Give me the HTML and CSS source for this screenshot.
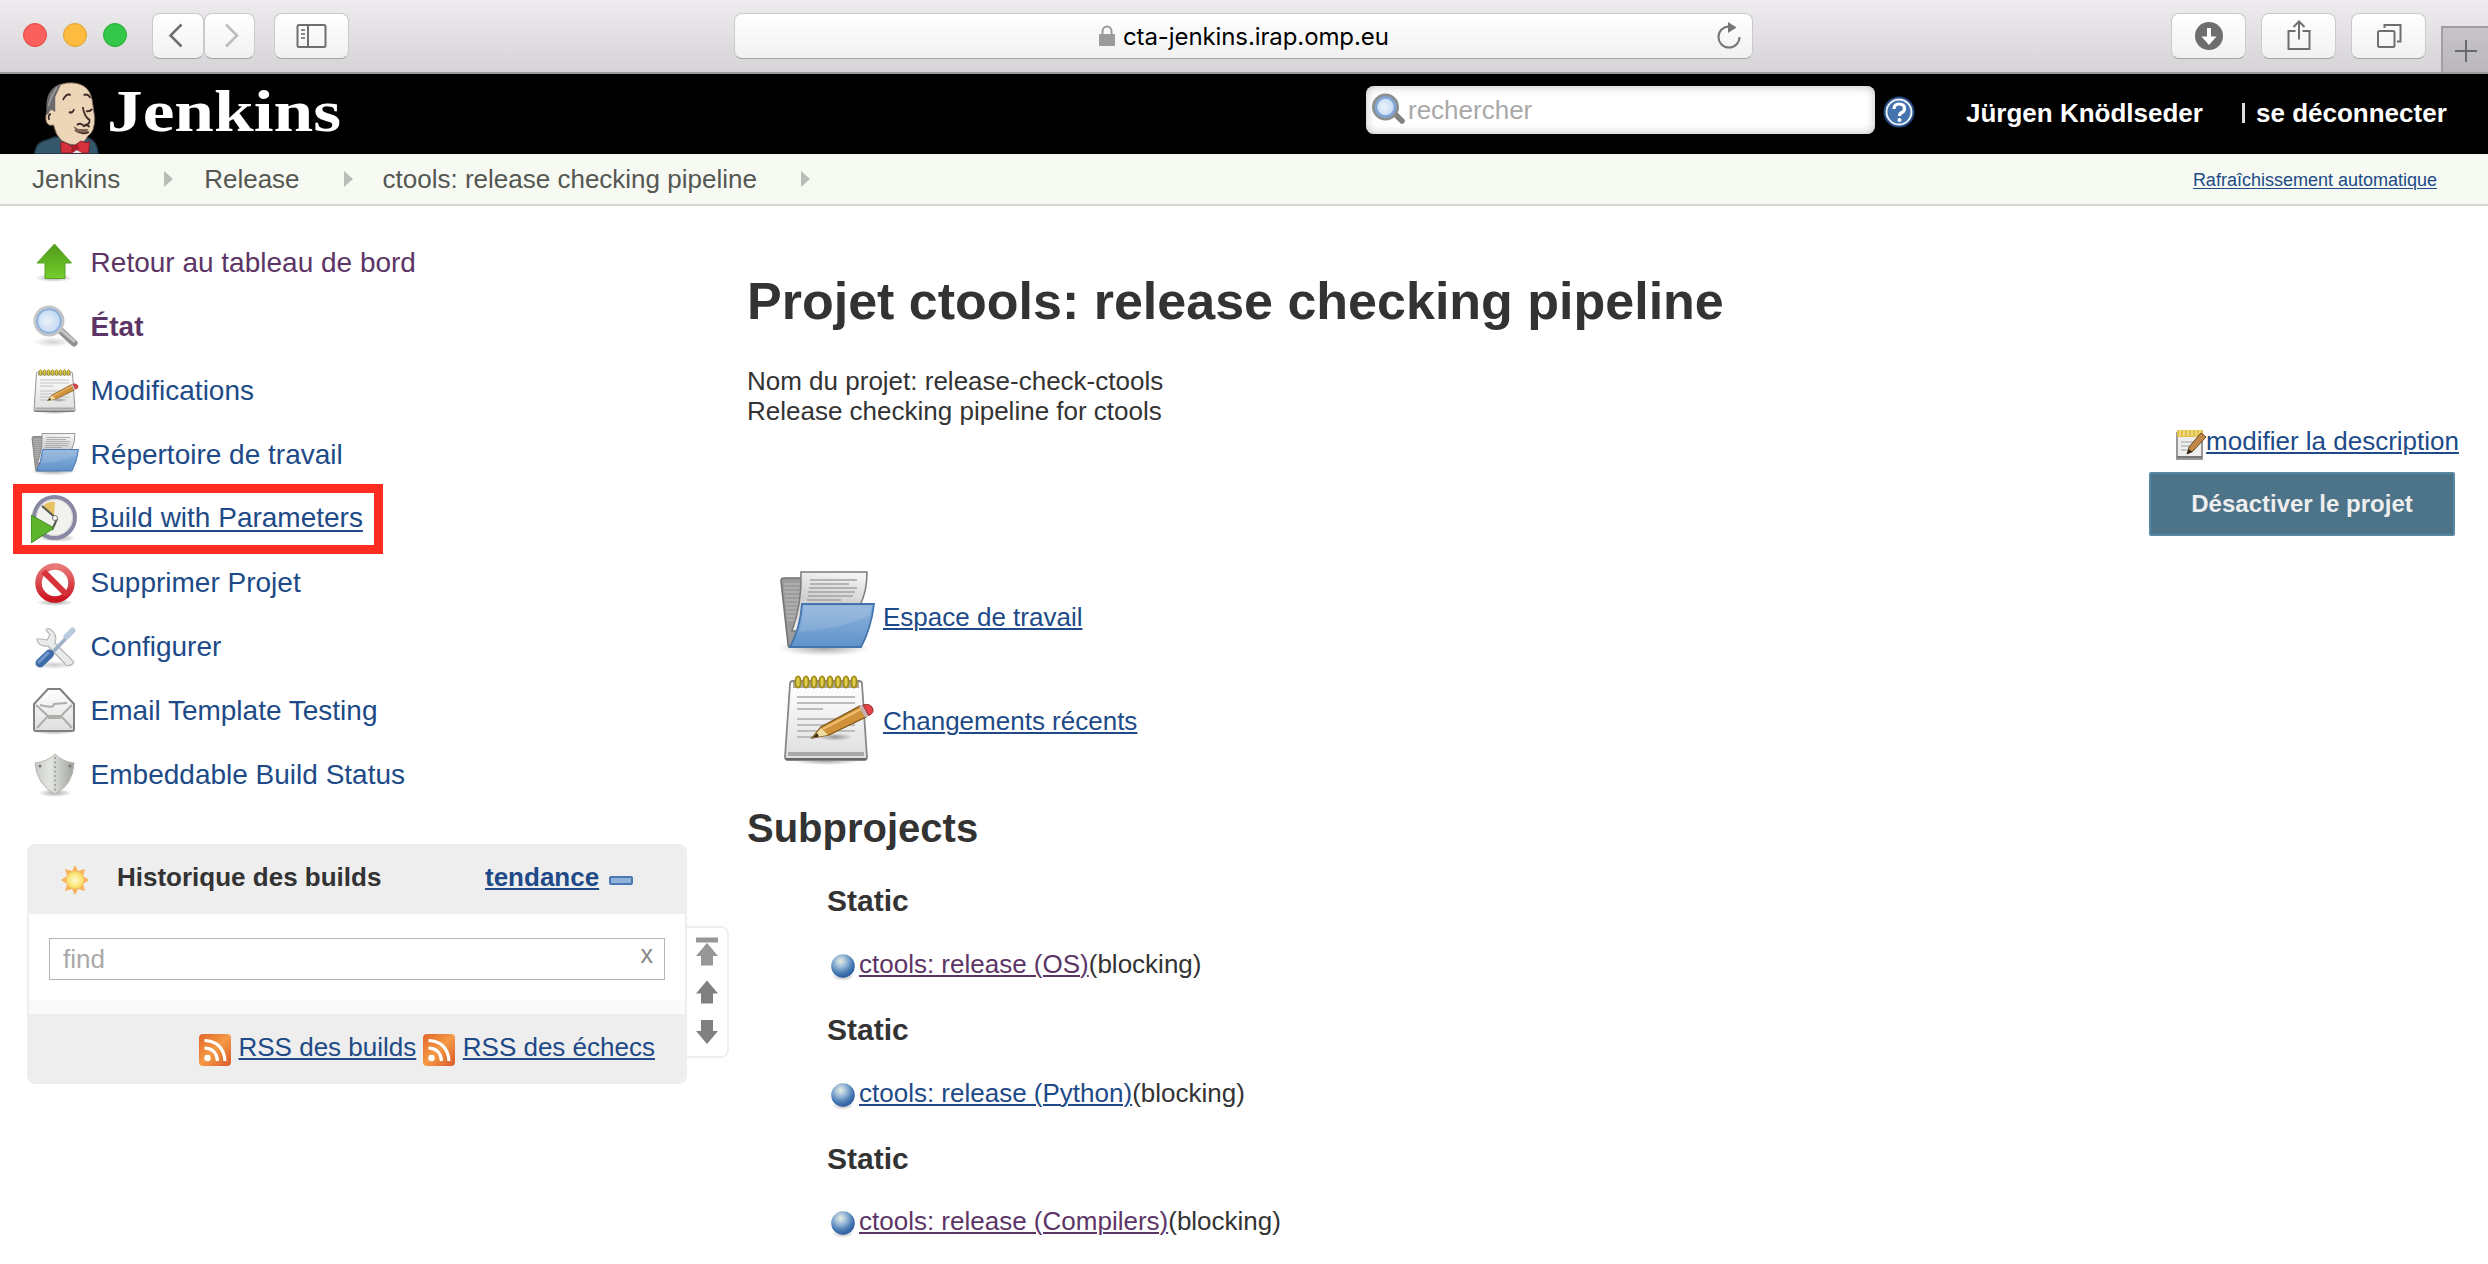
FILE: index.html
```html
<!DOCTYPE html>
<html lang="fr">
<head>
<meta charset="utf-8">
<title>ctools: release checking pipeline [Jenkins]</title>
<link rel="stylesheet" href="styles.css">
</head>
<body>
<svg class="defs" width="0" height="0">
  <defs>
    <linearGradient id="gBlue" x1="0" y1="0" x2="0" y2="1"><stop offset="0" stop-color="#8fb4dc"/><stop offset="1" stop-color="#6093cb"/></linearGradient>
    <linearGradient id="gPaper" x1="0" y1="0" x2="0" y2="1"><stop offset="0" stop-color="#ffffff"/><stop offset="1" stop-color="#dedede"/></linearGradient>
    <linearGradient id="gSheet" x1="0.6" y1="0" x2="0.4" y2="1"><stop offset="0" stop-color="#f4f4f4"/><stop offset="0.5" stop-color="#cfcfcf"/><stop offset="1" stop-color="#ececec"/></linearGradient>
    <linearGradient id="gGreen" x1="0" y1="0" x2="0" y2="1"><stop offset="0" stop-color="#4f9a1c"/><stop offset="1" stop-color="#74ce2b"/></linearGradient>
    <linearGradient id="gRed" x1="0" y1="0" x2="0" y2="1"><stop offset="0" stop-color="#e87878"/><stop offset="1" stop-color="#cc1620"/></linearGradient>
    <linearGradient id="gShield" x1="0" y1="0" x2="1" y2="0"><stop offset="0" stop-color="#c9ccc6"/><stop offset="0.4" stop-color="#e3e5e1"/><stop offset="1" stop-color="#9fa29c"/></linearGradient>
    <linearGradient id="gRss" x1="0" y1="0" x2="1" y2="1"><stop offset="0" stop-color="#e2652b"/><stop offset="0.5" stop-color="#f59a45"/><stop offset="1" stop-color="#d9592b"/></linearGradient>
    <radialGradient id="gLens" cx="0.45" cy="0.5" r="0.6"><stop offset="0" stop-color="#eaf2fb"/><stop offset="1" stop-color="#b4cfee"/></radialGradient>
    <radialGradient id="gBall" cx="0.4" cy="0.3" r="0.75"><stop offset="0" stop-color="#e8eedf"/><stop offset="0.3" stop-color="#a3c1dc"/><stop offset="0.7" stop-color="#4377b3"/><stop offset="1" stop-color="#2a5798"/></radialGradient>
    <radialGradient id="gShadow"><stop offset="0" stop-color="#000" stop-opacity="0.35"/><stop offset="1" stop-color="#000" stop-opacity="0"/></radialGradient>
    <radialGradient id="gSun"><stop offset="0" stop-color="#fffbd0"/><stop offset="1" stop-color="#f7dc5c"/></radialGradient>
    <symbol id="folder" viewBox="0 0 96 96">
      <ellipse cx="45" cy="79" rx="46" ry="8" fill="url(#gShadow)"/>
      <path d="M2 12q0-3 3-3h24v69H11q-2 0-2-3z" fill="#9c9c9c" stroke="#727272" stroke-width="1.6"/>
      <path d="M5 15h18M5 19h18M6 23h17M6 27h16M6 31h15M7 35h14M7 39h13M7 43h12M8 47h10M8 51h8" stroke="#c0c0c0" stroke-width="1"/>
      <path d="M22 3h66q0 20-7 33L40 62H13Q23 35 22 3z" fill="url(#gSheet)" stroke="#7b7b7b" stroke-width="1.5"/>
      <path d="M31 11h47M31 15h39M30 19h48M29 23h47M29 27h45M28 31h34" stroke="#a2a2a2" stroke-width="1.6"/>
      <path d="M23 35h72q-3 25-13 43H11q10-18 12-43z" fill="url(#gBlue)" stroke="#4474ae" stroke-width="1.8"/>
      <path d="M25 37h67q-1 5-2 10Q60 60 20 63q4-12 5-26z" fill="#fff" opacity="0.12"/>
    </symbol>
    <symbol id="notepad" viewBox="0 0 96 96">
      <ellipse cx="47" cy="88" rx="34" ry="4" fill="url(#gShadow)"/>
      <path d="M14 8h66q3 0 3 3l5 73q0 3-3 3H9q-3 0-3-3l5-73q0-3 3-3z" fill="url(#gPaper)" stroke="#888" stroke-width="1.8"/>
      <path d="M14 9h66v6H14z" fill="#a9a996"/>
      <path d="M9 79h76v4H9z" fill="#a8a8a8"/>
      <path d="M7 86h80" stroke="#666" stroke-width="2"/>
      <g fill="#dccb46" stroke="#a08a1c" stroke-width="1.8"><ellipse cx="19" cy="9" rx="2.6" ry="5.6"/><ellipse cx="27" cy="9" rx="2.6" ry="5.6"/><ellipse cx="35" cy="9" rx="2.6" ry="5.6"/><ellipse cx="43" cy="9" rx="2.6" ry="5.6"/><ellipse cx="51" cy="9" rx="2.6" ry="5.6"/><ellipse cx="59" cy="9" rx="2.6" ry="5.6"/><ellipse cx="67" cy="9" rx="2.6" ry="5.6"/><ellipse cx="75" cy="9" rx="2.6" ry="5.6"/></g>
      <path d="M18 24h58M18 30h58M18 36h26M18 46h58M18 52h58M18 58h58M18 64h22" stroke="#bcbcbc" stroke-width="1.8"/>
      <ellipse cx="56" cy="64" rx="18" ry="4" fill="url(#gShadow)"/>
      <path d="M33 65l9-11 39-21 6 11-37 18z" fill="#d0923a" stroke="#7c5315" stroke-width="1.3"/>
      <path d="M44 56l38-20" stroke="#efbf70" stroke-width="2"/>
      <path d="M33 65l9-10 7 7z" fill="#f0dca4"/>
      <path d="M33 65l5-5 2 3.500z" fill="#3b2a10"/>
      <path d="M80 33.500l4-2 6 11-4 2z" fill="#c9b3b0"/>
      <path d="M84 32q7-2 9.500 3t-4 7.500z" fill="#e8404a" stroke="#8d3329" stroke-width="1"/>
    </symbol>
    <symbol id="ball" viewBox="0 0 32 32">
      <ellipse cx="16" cy="27" rx="11" ry="5" fill="url(#gShadow)"/>
      <circle cx="16" cy="17" r="11.800" fill="url(#gBall)"/>
    </symbol>
    <symbol id="rss" viewBox="0 0 32 32">
      <rect width="32" height="32" rx="4" fill="url(#gRss)"/>
      <circle cx="8.500" cy="24" r="3.200" fill="#fff"/>
      <path d="M5.500 14q12 0.500 13 13M5.500 6.500q19 1 20.500 20.500" fill="none" stroke="#fff" stroke-width="3.200"/>
    </symbol>
  </defs>
</svg>

<div class="toolbar">
  <div class="lights"><i class="light red"></i><i class="light yellow"></i><i class="light green"></i></div>
  <div class="btn nav-back"><svg width="50" height="44" viewBox="0 0 50 44"><path d="M28.500 10.500L17.500 21.500 28.500 32.500" fill="none" stroke="#6e6e6e" stroke-width="2.500"/></svg></div>
  <div class="btn nav-fwd"><svg width="48" height="44" viewBox="0 0 48 44"><path d="M20 10.500L31 21.500 20 32.500" fill="none" stroke="#bcbcbc" stroke-width="2.500"/></svg></div>
  <div class="btn sidebar-btn"><svg width="74" height="44" viewBox="0 0 74 44"><rect x="22.500" y="11" width="28" height="22" rx="1.500" fill="none" stroke="#6e6e6e" stroke-width="2"/><path d="M33 11v22" stroke="#6e6e6e" stroke-width="2"/><path d="M26 16h4M26 20h4M26 24h4" stroke="#8a8a8a" stroke-width="1.800"/></svg></div>
  <div class="address">
    <svg class="lock" width="16" height="22" viewBox="0 0 16 22"><path d="M3.500 10V6.500a4.500 5 0 0 1 9 0V10" fill="none" stroke="#9b9b9b" stroke-width="2"/><rect y="9" width="16" height="12" rx="1" fill="#9b9b9b"/></svg>
    <span class="url">cta-jenkins.irap.omp.eu</span>
    <svg class="reload" width="26" height="28" viewBox="0 0 26 28"><path d="M13 4.500A10.500 10.500 0 1 0 23.500 15" fill="none" stroke="#757575" stroke-width="2"/><path d="M12 0l8.500 5.500L12 11z" fill="#757575"/></svg>
  </div>
  <div class="btn tool"><svg width="74" height="44" viewBox="0 0 74 44"><circle cx="37" cy="22" r="14" fill="#6e6e6e"/><path d="M35 14h4v8.500h5.500L37 31l-7.500-8.500H35z" fill="#fff"/></svg></div>
  <div class="btn tool"><svg width="74" height="44" viewBox="0 0 74 44"><path d="M33.500 17h-7v18h21V17h-7M37 25.500V8M31.500 13L37 7.500 42.500 13" fill="none" stroke="#6e6e6e" stroke-width="2"/></svg></div>
  <div class="btn tool"><svg width="74" height="44" viewBox="0 0 74 44"><rect x="26" y="17" width="16.500" height="16" rx="1.500" fill="none" stroke="#6e6e6e" stroke-width="2"/><path d="M32.500 14v-3H48.500v16.500H45" fill="none" stroke="#6e6e6e" stroke-width="2"/></svg></div>
  <div class="newtab"><svg width="45" height="46" viewBox="0 0 45 46"><path d="M12 23h22M23 12v22" stroke="#6a6a6c" stroke-width="2"/></svg></div>
</div>

<header class="header">
  <svg class="logo" width="330" height="80" viewBox="0 0 330 80">
    <g transform="translate(-1 0) scale(.86 1)">
    <path d="M3 80q1-12 14-14l9-3 40 1q10 3 11 16z" fill="#35586d" stroke="#1e3442" stroke-width="1.500"/>
    <path d="M20 29q0-18 20-20 26-2 30 17l3 18q0 14-8 18-4 8-15 9-20 0-25-20-8 2-9-6 0-8 4-8z" fill="#edd5b8" stroke="#6f5a4a" stroke-width="1"/>
    <path d="M17 40q-3-26 17-30l-7 13v15l-4-2q-3 0-4 5z" fill="#6c6a6c"/>
    <path d="M22 24l7-11M19 32l5-12" stroke="#9b999b" stroke-width="2"/>
    <path d="M36 26q4-7 9-5M60 21q5-2 8 3M43 38q4 2 6-3M63 37q4 1 7-2M59 33q2 10 8 13 0 5-6 5M22 40q-4 1-2 6M52 51q5-3 8 1 4-2 7 1M50 56q7 5 16 2" fill="none" stroke="#3d2c27" stroke-width="2"/>
    <path d="M48 52l6 3 12 0-4 4-10-1z" fill="#7e6557"/>
    <path d="M33 68q8 0 14 5l10-6q7 3 10 0l-1 12H34z" fill="#d5313c" stroke="#7b1f26" stroke-width="1"/>
    <path d="M46 71h8v8h-8z" fill="#a61f2a"/>
    <path d="M47 79l5-3 6 3z" fill="#dfe6ea"/>
    </g>
    <text x="74" y="57" textLength="234" lengthAdjust="spacingAndGlyphs" class="logo-text">Jenkins</text>
  </svg>
  <div class="search">
    <svg width="34" height="32" viewBox="0 0 34 32"><path d="M24 21l7 7" stroke="#82827c" stroke-width="5.500" stroke-linecap="round"/><circle cx="14.500" cy="14" r="12" fill="url(#gLens)" stroke="#8b8f90" stroke-width="3"/><circle cx="14.500" cy="14" r="9.500" fill="none" stroke="#7fa5d6" stroke-width="2.500"/></svg>
    <span class="ph">rechercher</span>
  </div>
  <svg class="help" width="32" height="32" viewBox="0 0 32 32"><circle cx="16" cy="16" r="15.500" fill="#274a82"/><circle cx="16" cy="16" r="12.500" fill="#4574ad" stroke="#e9eff6" stroke-width="2"/><path d="M11 13q0-5 5-5 5.500 0 5.500 4.500 0 3-3 4.200-2 1-2 3.300" fill="none" stroke="#fff" stroke-width="3.200"/><circle cx="16.500" cy="24" r="2" fill="#fff"/></svg>
  <span class="user">Jürgen Knödlseder</span>
  <span class="logout"><i class="bar"></i>se déconnecter</span>
</header>

<nav class="crumbs">
  <span>Jenkins</span><i class="sep s1"></i><span>Release</span><i class="sep s2"></i><span>ctools: release checking pipeline</span><i class="sep s3"></i>
  <a class="auto">Rafraîchissement automatique</a>
</nav>

<div class="page">
  <aside class="side">
    <a class="task visited"><svg width="48" height="48" viewBox="0 0 48 48"><ellipse cx="23" cy="38" rx="19" ry="4" fill="url(#gShadow)"/><path d="M23.500 4L40.500 23H34v15.500H14V23H6z" fill="url(#gGreen)" stroke="#58a226" stroke-width="1"/></svg><span>Retour au tableau de bord</span></a>
    <a class="task visited current"><svg width="48" height="48" viewBox="0 0 48 48"><ellipse cx="22" cy="38" rx="20" ry="5" fill="url(#gShadow)" opacity="0.500"/><path d="M30 27l13 12" stroke="#8f8f8f" stroke-width="7" stroke-linecap="round"/><path d="M30 26l13 11" stroke="#c4c4c4" stroke-width="3" stroke-linecap="round"/><circle cx="18" cy="17" r="14" fill="url(#gLens)" stroke="#c4c5c5" stroke-width="3"/><circle cx="18" cy="17" r="11.800" fill="none" stroke="#8db0dc" stroke-width="2"/></svg><span>État</span></a>
    <a class="task"><svg width="48" height="48"><use href="#notepad"/></svg><span>Modifications</span></a>
    <a class="task"><svg width="48" height="48"><use href="#folder"/></svg><span>Répertoire de travail</span></a>
    <a class="task build"><svg width="48" height="48" viewBox="0 0 48 48"><ellipse cx="26" cy="43" rx="19" ry="4" fill="url(#gShadow)"/><circle cx="23.500" cy="22.500" r="20.500" fill="#f1f1ed" stroke="#8988a2" stroke-width="4"/><circle cx="23.500" cy="22.500" r="18" fill="none" stroke="#cfcfd4" stroke-width="1"/><path d="M23 21L12 11q5-5 12-4z" fill="#e5c365"/><path d="M11 11l15 13-5 11" fill="none" stroke="#55554f" stroke-width="2"/><circle cx="24" cy="23" r="2.500" fill="#fff" stroke="#777" stroke-width="1"/><path d="M0 20l23 13L0 48z" fill="#5db62b" stroke="#3e8520" stroke-width="1"/></svg><span>Build with Parameters</span></a>
    <a class="task"><svg width="48" height="48" viewBox="0 0 48 48"><ellipse cx="24" cy="42.500" rx="19" ry="3.500" fill="url(#gShadow)"/><circle cx="24" cy="23" r="16.500" fill="#fff" stroke="url(#gRed)" stroke-width="6.500"/><path d="M12.500 11.500l23 23" stroke="#d8323a" stroke-width="6"/></svg><span>Supprimer Projet</span></a>
    <a class="task"><svg width="48" height="48" viewBox="0 0 48 48"><ellipse cx="23" cy="41" rx="22" ry="4" fill="url(#gShadow)" opacity="0.600"/><g transform="translate(0 1)"><path d="M6 14q1 8 11 7l18 19q5 2 8-3L24 18q3-9-5-14-4-1-4 1l4 5-3 5-5-1z" fill="#e9eaea" stroke="#b3b5b5" stroke-width="1.200"/><path d="M39 9L21 28" stroke="#9bb0c4" stroke-width="3.500"/><path d="M41.500 5.500L35.500 11.500" stroke="#b8cbdc" stroke-width="6" stroke-linecap="round"/><path d="M18.500 29L9 38" stroke="#3f6ca8" stroke-width="9" stroke-linecap="round"/><path d="M17 28L8 37" stroke="#7099cd" stroke-width="3" stroke-linecap="round"/></g></svg><span>Configurer</span></a>
    <a class="task"><svg width="48" height="48" viewBox="0 0 48 48"><ellipse cx="23" cy="43" rx="22" ry="4" fill="url(#gShadow)"/><path d="M3 16L17 1h12l14 15v25q0 2-2 2H5q-2 0-2-2z" fill="url(#gPaper)" stroke="#80817c" stroke-width="2"/><path d="M5 17l12 11h13l11-11M17 28L6 40M30 28l11 12M17 30h13M9 17q14 4 14-1l13-1" fill="none" stroke="#adaeaa" stroke-width="2"/></svg><span>Email Template Testing</span></a>
    <a class="task"><svg width="48" height="48" viewBox="0 0 48 48"><ellipse cx="24" cy="41" rx="17" ry="4" fill="url(#gShadow)"/><path d="M24 2q8 8 19 9-1 22-19 31Q6 33 4 11q12-1 20-9z" fill="url(#gShield)" stroke="#b3b5b0" stroke-width="1"/><path d="M24 5v34" stroke="#a5a8a2" stroke-width="2" stroke-dasharray="2 2.500"/><circle cx="9" cy="14" r="1.500" fill="#777"/><circle cx="39" cy="14" r="1.500" fill="#777"/></svg><span>Embeddable Build Status</span></a>

    <div class="history">
      <section class="pane">
        <div class="pane-head">
          <svg class="sun" width="30" height="30" viewBox="0 0 30 30"><path d="M15 0l3 6 7-2-2 7 6 4-6 4 2 7-7-2-3 6-3-6-7 2 2-7-6-4 6-4-2-7 7 2z" fill="#f9b25a"/><circle cx="15" cy="15" r="8.800" fill="url(#gSun)" stroke="#f9c468" stroke-width="1"/></svg>
          <b class="pane-title">Historique des builds</b>
          <a class="trend">tendance</a>
          <i class="minus"></i>
        </div>
        <div class="pane-body"><div class="find"><span>find</span><span class="clear">x</span></div></div>
        <div class="pane-strip"></div>
        <div class="pane-foot">
          <svg width="32" height="32"><use href="#rss"/></svg><a>RSS des builds</a>
          <svg class="rss2" width="32" height="32"><use href="#rss"/></svg><a>RSS des échecs</a>
        </div>
      </section>
      <div class="pager"><svg width="41" height="128" viewBox="0 0 41 128"><path d="M9 9.500h22v5H9zM20 15l11 13h-5v9.500H14V28H9z" fill="#979797"/><path d="M20 52.500l11 13h-5v10H14v-10H9z" fill="#808080"/><path d="M20 116l11-13h-5V92H14v11H9z" fill="#808080"/></svg></div>
    </div>
  </aside>

  <main class="main">
    <h1>Projet ctools: release checking pipeline</h1>
    <div class="desc">Nom du projet: release-check-ctools<br>Release checking pipeline for ctools</div>
    <div class="edit"><svg width="30" height="32" viewBox="0 0 30 32"><path d="M1 4h25v26H1z" fill="#eee" stroke="#999" stroke-width="2"/><path d="M1 28h25" stroke="#777" stroke-width="2"/><path d="M1 1h26v7H1z" fill="#e2c04a"/><path d="M4 1v6M8 1v6M12 1v6M16 1v6M20 1v6M24 1v6" stroke="#f2de8e" stroke-width="1.500"/><path d="M5 13h15M5 17h12M5 21h6" stroke="#bbb" stroke-width="1.500"/><path d="M25 4l5 4-13 14-6 3 2-7z" fill="#c0894a" stroke="#65431c" stroke-width="1"/><path d="M11 25l1.500-5 4 3z" fill="#33261a"/></svg><a>modifier la description</a></div>
    <div class="disable-row"><button class="disable">Désactiver le projet</button></div>
    <div class="links">
      <div class="big"><svg width="96" height="96"><use href="#folder"/></svg><a>Espace de travail</a></div>
      <div class="big"><svg width="96" height="96"><use href="#notepad"/></svg><a>Changements récents</a></div>
    </div>
    <h2>Subprojects</h2>
    <div class="subs">
      <h3>Static</h3>
      <div class="sub"><svg width="32" height="32"><use href="#ball"/></svg><a class="visited">ctools: release (OS)</a>(blocking)</div>
      <h3>Static</h3>
      <div class="sub"><svg width="32" height="32"><use href="#ball"/></svg><a>ctools: release (Python)</a>(blocking)</div>
      <h3>Static</h3>
      <div class="sub last"><svg width="32" height="32"><use href="#ball"/></svg><a class="visited">ctools: release (Compilers)</a>(blocking)</div>
    </div>
  </main>
</div>
</body>
</html>
```
FILE: styles.css
```css
* { box-sizing: border-box; }
body {
  margin: 0;
  width: 2488px;
  height: 1264px;
  overflow: hidden;
  background: #fff;
  color: #333;
  font: 26px/30px "Liberation Sans", Arial, sans-serif;
}
.defs { position: absolute; }
svg { display: block; flex: none; }
a { color: #204a87; text-decoration: underline; text-decoration-thickness: 2px; text-underline-offset: 2px; }
a.visited { color: #5c3566; }

/* Browser toolbar */
.toolbar {
  display: flex;
  height: 74px;
  padding: 13px 0 0 23px;
  border-bottom: 2px solid #9c9a9c;
  background: linear-gradient(#eeecef, #d5d3d6);
}
.lights { display: flex; gap: 16px; padding-top: 10px; width: 130px; }
.light { width: 24px; height: 24px; border-radius: 50%; border: 1px solid; }
.red { background: #fc605c; border-color: #df4744; }
.yellow { background: #fdbc40; border-color: #de9f34; }
.green { background: #34c84a; border-color: #27aa35; }
.btn, .address {
  flex: none;
  height: 46px;
  border-radius: 8px;
  background: linear-gradient(#fff, #f1f1f1);
  border: 1px solid #cbc9cc;
  border-bottom-color: #a5a3a6;
  display: flex;
  align-items: center;
  justify-content: center;
}
.nav-back { width: 52px; }
.nav-fwd { width: 51px; }
.sidebar-btn { width: 75px; margin-left: 19px; }
.address { width: 1019px; margin: 0 418px 0 385px; justify-content: flex-start; padding-left: 364px; }
.lock { margin-right: 8px; }
.url { font-family: Inter, sans-serif; font-size: 24px; color: #000; width: 593px; padding-top: 2px; white-space: nowrap; letter-spacing: -0.1px; }
.tool { width: 75px; margin-right: 15px; }
.newtab {
  width: 47px;
  height: 46px;
  margin: 13px 0 0 auto;
  background: linear-gradient(#c6c4c7, #b9b7ba);
  border: 2px solid #a09ea1;
  border-width: 2px 0 0 2px;
}

/* Jenkins header */
.header { display: flex; height: 80px; background: #000; color: #fff; padding-left: 33px; font-weight: bold; }
.logo-text { font: bold 60px "Liberation Serif", serif; fill: #fff; }
.logo { width: 330px; margin-right: 1003px; }
.search {
  display: flex;
  width: 509px;
  height: 48px;
  margin: 12px 8px 0 0;
  padding: 7px 5px;
  gap: 3px;
  border-radius: 8px;
  background: #fff;
  box-shadow: inset 0 0 10px #bbb;
}
.ph { color: #a9a9a9; font-weight: normal; line-height: 34px; }
.help { margin: 22px 51px 0 0; }
.user, .logout { line-height: 78px; height: 78px; white-space: nowrap; }
.user { width: 276px; }
.logout { display: flex; align-items: center; }
.bar { width: 3px; height: 20px; background: #ddd; margin-right: 11px; }

/* Breadcrumbs */
.crumbs {
  display: flex;
  align-items: center;
  height: 52px;
  padding: 0 51px 0 32px;
  background: #f6faf2;
  border-bottom: 2px solid #d3d7cf;
  color: #555753;
}
.sep { border-left: 9px solid #babdb6; border-top: 8px solid transparent; border-bottom: 8px solid transparent; }
.s1 { margin-left: 44px; margin-right: 31px; }
.s2 { margin-left: 44px; margin-right: 30px; }
.s3 { margin-left: 44px; }
.auto { margin-left: auto; margin-top: 1px; font-size: 18px; text-decoration-thickness: 1px; }

/* Side panel */
.page { display: flex; }
.side { flex: none; width: 747px; padding: 26px 0 0 13px; }
.task { display: flex; align-items: center; height: 64px; padding-left: 18px; gap: 10px; font-size: 28px; line-height: 32px; text-decoration: none; }
.task span { padding: 0 0 2px 1.6px; }
.current { font-weight: bold; }
.task.build { width: 370px; height: 70px; margin: -4px 0 -2px; padding: 0 0 1px 9px; border: 9px solid #ff2d1f; }
.build span { padding-bottom: 1px; text-decoration: underline; text-decoration-thickness: 2px; text-underline-offset: 3px; }

.history { display: flex; margin: 36px 0 0 14px; }
.pane { width: 660px; height: 240px; border: 2px solid #eee; border-radius: 8px; overflow: hidden; }
.pane-head { display: flex; align-items: center; height: 68px; background: #eee; padding-left: 31px; }
.sun { margin-right: 27px; }
.pane-title { width: 368px; padding-bottom: 6px; }
.trend { font-weight: bold; margin-right: 10px; padding-bottom: 6px; }
.minus { width: 24px; height: 9px; border: 2px solid #4a78b2; border-radius: 2px; background: #8fb2da; }
.pane-body { height: 86px; padding: 24px 20px 0 20px; }
.find { display: flex; justify-content: space-between; height: 42px; padding: 5px 11px 0 13px; border: 1px solid #b4b4b4; color: #a9a9a9; }
.clear { color: #888; margin-top: -5px; font-size: 25px; }
.pane-strip { height: 15px; background: #fafafa; border-bottom: 1px solid #eee; }
.pane-foot { display: flex; height: 69px; padding: 19px 0 0 170px; background: #eee; }
.pane-foot a { margin: -2px 0 0 7.5px; white-space: nowrap; height: 30px; }
.rss2 { margin-left: 7px; }
.pager { width: 42px; height: 132px; margin-top: 82px; border: 2px solid #eee; border-left: 0; border-radius: 0 8px 8px 0; }

/* Main panel */
.main { flex: 1; padding: 65px 29px 0 0; }
h1 { margin: 0 0 35px; font-size: 52px; line-height: 60px; }
.edit { display: flex; justify-content: flex-end; }
.edit svg { margin-top: 3px; }
.edit, .disable-row { height: 30px; }
.disable-row { display: flex; justify-content: flex-end; height: 64px; margin: 16px 4px 0 0; }
.disable { width: 306px; height: 64px; border: 2px solid #5788a1; border-radius: 2px; background: #4d7389; color: #eee; font: bold 24px/30px "Liberation Sans", Arial, sans-serif; }
.links { padding: 29px 0 0 32px; }
.big { display: flex; align-items: center; gap: 8px; height: 104px; }
h2 { margin: 32px 0 33px; font-size: 40px; line-height: 46px; }
.subs { padding-left: 80px; }
h3 { margin: 0 0 31px; font-size: 30px; line-height: 34px; }
.sub { display: flex; height: 30px; margin-bottom: 34px; }
.sub.last { margin: -1px 0 0; }
```
